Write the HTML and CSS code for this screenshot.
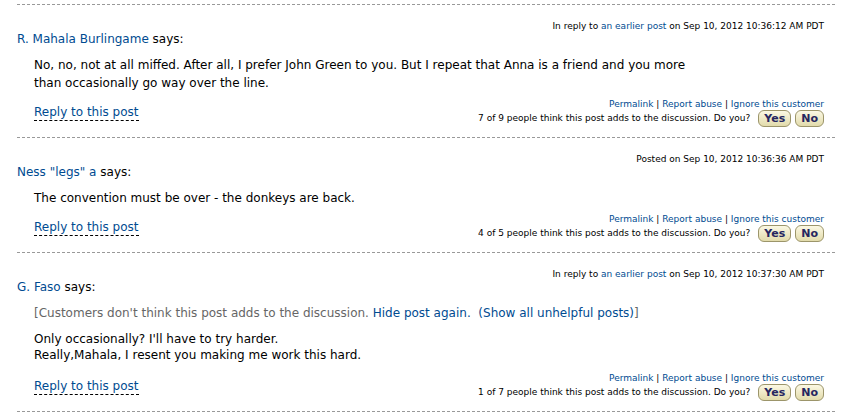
FILE: index.html
```html
<!DOCTYPE html>
<html lang="en">
<head>
    <meta charset="UTF-8">
    <title>Customer Discussions</title>
    <link rel="stylesheet" href="styles.css">
</head>
<body>
    <div class="thread">
        <div class="post">
            <div class="post-date">In reply to <a href="#">an earlier post</a> on Sep 10, 2012 10:36:12 AM PDT</div>
            <div class="author"><a href="#">R. Mahala Burlingame</a> says:</div>
            <div class="post-body">
                <p>No, no, not at all miffed. After all, I prefer John Green to you. But I repeat that Anna is a friend and you more than occasionally go way over the line.</p>
            </div>
            <div class="post-footer">
                <a href="#" class="reply">Reply to this post</a>
                <div class="post-actions">
                    <div class="links"><a href="#">Permalink</a> | <a href="#">Report abuse</a> | <a href="#">Ignore this customer</a></div>
                    <div class="vote">7 of 9 people think this post adds to the discussion. Do you? <button>Yes</button><button>No</button></div>
                </div>
            </div>
        </div>
        <div class="post">
            <div class="post-date">Posted on Sep 10, 2012 10:36:36 AM PDT</div>
            <div class="author"><a href="#">Ness "legs" a</a> says:</div>
            <div class="post-body">
                <p>The convention must be over - the donkeys are back.</p>
            </div>
            <div class="post-footer">
                <a href="#" class="reply">Reply to this post</a>
                <div class="post-actions">
                    <div class="links"><a href="#">Permalink</a> | <a href="#">Report abuse</a> | <a href="#">Ignore this customer</a></div>
                    <div class="vote">4 of 5 people think this post adds to the discussion. Do you? <button>Yes</button><button>No</button></div>
                </div>
            </div>
        </div>
        <div class="post">
            <div class="post-date">In reply to <a href="#">an earlier post</a> on Sep 10, 2012 10:37:30 AM PDT</div>
            <div class="author"><a href="#">G. Faso</a> says:</div>
            <div class="post-body">
                <p class="hidden-note">[Customers don't think this post adds to the discussion. <a href="#">Hide post again.</a>&nbsp; <a href="#">(Show all unhelpful posts)</a>]</p>
                <p class="tight">Only occasionally? I'll have to try harder.<br>Really,Mahala, I resent you making me work this hard.</p>
            </div>
            <div class="post-footer">
                <a href="#" class="reply">Reply to this post</a>
                <div class="post-actions">
                    <div class="links"><a href="#">Permalink</a> | <a href="#">Report abuse</a> | <a href="#">Ignore this customer</a></div>
                    <div class="vote">1 of 7 people think this post adds to the discussion. Do you? <button>Yes</button><button>No</button></div>
                </div>
            </div>
        </div>
    </div>
</body>
</html>
```
FILE: styles.css
```css
body {
    margin: 0;
    background-color: #fff;
    font-family: "DejaVu Sans", Verdana, sans-serif;
    font-size: 12px;
    color: #000;
}

a {
    color: #004b91;
    text-decoration: none;
}

.thread {
    margin: 4px 17px 0 17px;
    width: 818px;
    border-bottom: 1px dashed #999;
}

.post {
    border-top: 1px dashed #999;
    padding: 16px 11px 12px 0;
}

.post-date {
    text-align: right;
    font-size: 9px;
}

.author {
    margin-top: 1px;
    font-size: 12px;
}

.post-body {
    margin: 10px 0 0 17px;
    max-width: 680px;
}

.post-body p {
    margin: 0 0 4px 0;
    line-height: 18px;
}

.hidden-note {
    color: #666;
}

.post-body .hidden-note {
    margin-top: 2px;
    margin-bottom: 9px;
}

.post-body .tight {
    line-height: 16px;
    margin-bottom: 8px;
}

.post-footer {
    display: flex;
    justify-content: space-between;
    align-items: flex-start;
    margin-top: 5px;
}

.reply {
    margin-left: 17px;
    margin-top: 8px;
    padding-bottom: 1px;
    border-bottom: 1px dashed #000;
    line-height: 14px;
}

.post-actions {
    text-align: right;
    font-size: 9px;
}

.links {
    line-height: 14px;
}

.vote {
    display: flex;
    align-items: center;
    justify-content: flex-end;
    height: 14px;
}

button {
    margin-left: 4px;
    height: 17px;
    padding: 0 5px;
    border: 1px solid #9c956a;
    border-radius: 6px;
    background: linear-gradient(#fbf8e4, #e2dbab);
    font-family: "DejaVu Sans", Verdana, sans-serif;
    font-size: 11px;
    font-weight: bold;
    color: #262660;
}

.vote button:first-child {
    margin-left: 8px;
}
```
